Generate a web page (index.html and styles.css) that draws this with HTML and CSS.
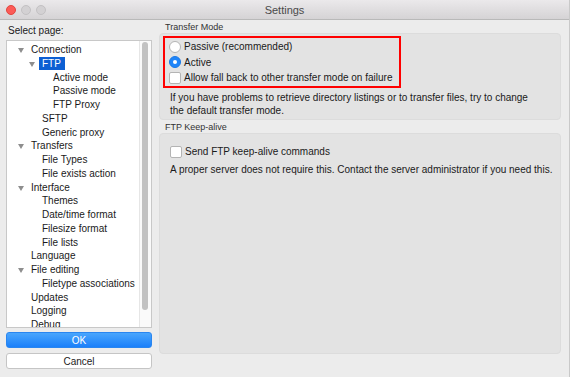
FILE: index.html
```html
<!DOCTYPE html>
<html lang="en">
<head>
  <meta charset="UTF-8">
  <title>Settings</title>
  <link rel="stylesheet" href="styles.css">
</head>
<body>

<div class="window">
  <div class="titlebar">
    <div class="lights">
      <span class="light red"></span>
      <span class="light"></span>
      <span class="light"></span>
    </div>
    <div class="title">Settings</div>
  </div>

  <div class="content">
    <!-- left column: page tree + buttons -->
    <div class="sidebar">
      <div class="select-label">Select page:</div>
      <div class="tree">
        <div class="tree-items">
          <div class="row lvl0"><span class="arrow"></span>Connection</div>
          <div class="row lvl1"><span class="arrow"></span><span class="selected">FTP</span></div>
          <div class="row lvl2">Active mode</div>
          <div class="row lvl2">Passive mode</div>
          <div class="row lvl2">FTP Proxy</div>
          <div class="row lvl1">SFTP</div>
          <div class="row lvl1">Generic proxy</div>
          <div class="row lvl0"><span class="arrow"></span>Transfers</div>
          <div class="row lvl1">File Types</div>
          <div class="row lvl1">File exists action</div>
          <div class="row lvl0"><span class="arrow"></span>Interface</div>
          <div class="row lvl1">Themes</div>
          <div class="row lvl1">Date/time format</div>
          <div class="row lvl1">Filesize format</div>
          <div class="row lvl1">File lists</div>
          <div class="row lvl0">Language</div>
          <div class="row lvl0"><span class="arrow"></span>File editing</div>
          <div class="row lvl1">Filetype associations</div>
          <div class="row lvl0">Updates</div>
          <div class="row lvl0">Logging</div>
          <div class="row lvl0">Debug</div>
        </div>
        <div class="scrollbar"><div class="thumb"></div></div>
      </div>
      <button class="btn btn-ok">OK</button>
      <button class="btn btn-cancel">Cancel</button>
    </div>

    <!-- right column: settings page -->
    <div class="page">
      <div class="group-label">Transfer Mode</div>
      <div class="group group-mode">
        <div class="highlight">
          <div class="option"><span class="radio"></span>Passive (recommended)</div>
          <div class="option"><span class="radio checked"></span>Active</div>
          <div class="option"><span class="checkbox"></span>Allow fall back to other transfer mode on failure</div>
        </div>
        <p class="desc narrow">If you have problems to retrieve directory listings or to transfer files, try to change the default transfer mode.</p>
      </div>

      <div class="group-label">FTP Keep-alive</div>
      <div class="group group-keep">
        <div class="option"><span class="checkbox"></span>Send FTP keep-alive commands</div>
        <p class="desc">A proper server does not require this. Contact the server administrator if you need this.</p>
      </div>
    </div>
  </div>
</div>

</body>
</html>
```

FILE: styles.css
```css
body {
  margin: 0;
  padding: 0;
  font-family: "Liberation Sans", Arial, sans-serif;
  font-size: 10px;
  color: #1a1a1a;
  background-color: #ececec;
}

.window {
  width: 570px;
  height: 377px;
  background-color: #ececec;
  box-sizing: border-box;
  border-right: 1px solid #c9c9c9;
  overflow: hidden;
}

/* title bar */
.titlebar {
  height: 20px;
  box-sizing: border-box;
  background: linear-gradient(#ebe9eb, #d5d3d5);
  border-bottom: 1px solid #b9b9b9;
  display: flex;
  align-items: center;
  position: relative;
}

.lights {
  display: flex;
  gap: 5px;
  padding-left: 6px;
}

.light {
  width: 8px;
  height: 8px;
  border-radius: 50%;
  background-color: #d3d1d3;
  border: 0.5px solid #c3c1c3;
}

.light.red {
  background-color: #fc5b57;
  border-color: #e2463f;
}

.title {
  position: absolute;
  left: 0;
  right: 0;
  text-align: center;
  font-size: 11px;
  color: #4a4a4a;
}

.content {
  display: flex;
}

/* sidebar */
.sidebar {
  width: 146px;
  margin-left: 6px;
  display: flex;
  flex-direction: column;
}

.select-label {
  height: 20px;
  line-height: 21px;
  padding-left: 2px;
}

.tree {
  height: 288px;
  box-sizing: border-box;
  background-color: #fff;
  border: 1px solid #c8c8c8;
  display: flex;
  overflow: hidden;
}

.tree-items {
  flex: 1;
  padding-top: 2px;
}

.row {
  height: 13.75px;
  line-height: 13.75px;
  white-space: nowrap;
  position: relative;
}

.lvl0 { padding-left: 24px; }
.lvl1 { padding-left: 35px; }
.lvl2 { padding-left: 46px; }

.arrow {
  position: absolute;
  top: 5px;
  width: 0;
  height: 0;
  border-left: 3px solid transparent;
  border-right: 3px solid transparent;
  border-top: 5px solid #8e8e8e;
}

.lvl0 .arrow { left: 11px; }
.lvl1 .arrow { left: 22px; }

.selected {
  background-color: #0d5fd3;
  color: #fff;
  padding: 1px 4px 1px 3px;
  margin-left: -3px;
}

.scrollbar {
  width: 11px;
  border-left: 1px solid #e6e6e6;
  background-color: #fafafa;
  padding-top: 1px;
}

.thumb {
  width: 6px;
  height: 268px;
  margin-left: 2px;
  border-radius: 3px;
  background-color: #c2c2c2;
}

.btn {
  font-family: inherit;
  font-size: 10px;
  height: 16px;
  padding: 0;
  border-radius: 3px;
  box-sizing: border-box;
}

.btn-ok {
  margin-top: 4px;
  color: #fff;
  border: 1px solid #2a86f0;
  background: linear-gradient(#4aa6fd, #1b80fa);
}

.btn-cancel {
  margin-top: 5px;
  color: #222;
  border: 1px solid #c5c5c5;
  background-color: #fff;
}

/* right page */
.page {
  width: 402px;
  margin-left: 7px;
}

.group-label {
  font-size: 9px;
  color: #333;
  height: 13px;
  line-height: 14px;
  padding-left: 6px;
}

.group {
  background-color: #e3e3e3;
  border: 1px solid #dcdcdc;
  border-radius: 4px;
  box-sizing: border-box;
}

.group-mode {
  height: 87px;
  padding-top: 2px;
}

.group-keep {
  height: 221px;
  padding-top: 10px;
}

.highlight {
  width: 238px;
  margin-left: 3px;
  box-sizing: border-box;
  border: 2px solid #ff0000;
  padding: 1px 0 0 4px;
}

.option {
  height: 15.5px;
  display: flex;
  align-items: center;
  white-space: nowrap;
}

.group-keep .option {
  padding-left: 10px;
}

.radio,
.checkbox {
  width: 10px;
  height: 10px;
  margin-right: 3px;
  background-color: #fff;
  border: 1px solid #b4b4b4;
  flex-shrink: 0;
}

.radio {
  border-radius: 50%;
}

.checkbox {
  border-radius: 2px;
}

.radio.checked {
  background-color: #1f85f9;
  border-color: #1a79e6;
  position: relative;
}

.radio.checked::after {
  content: "";
  position: absolute;
  left: 3px;
  top: 3px;
  width: 4px;
  height: 4px;
  border-radius: 50%;
  background-color: #fff;
}

.desc {
  margin: 3px 0 0 10px;
  line-height: 13px;
  width: 385px;
}

.desc.narrow {
  width: 365px;
}
```
